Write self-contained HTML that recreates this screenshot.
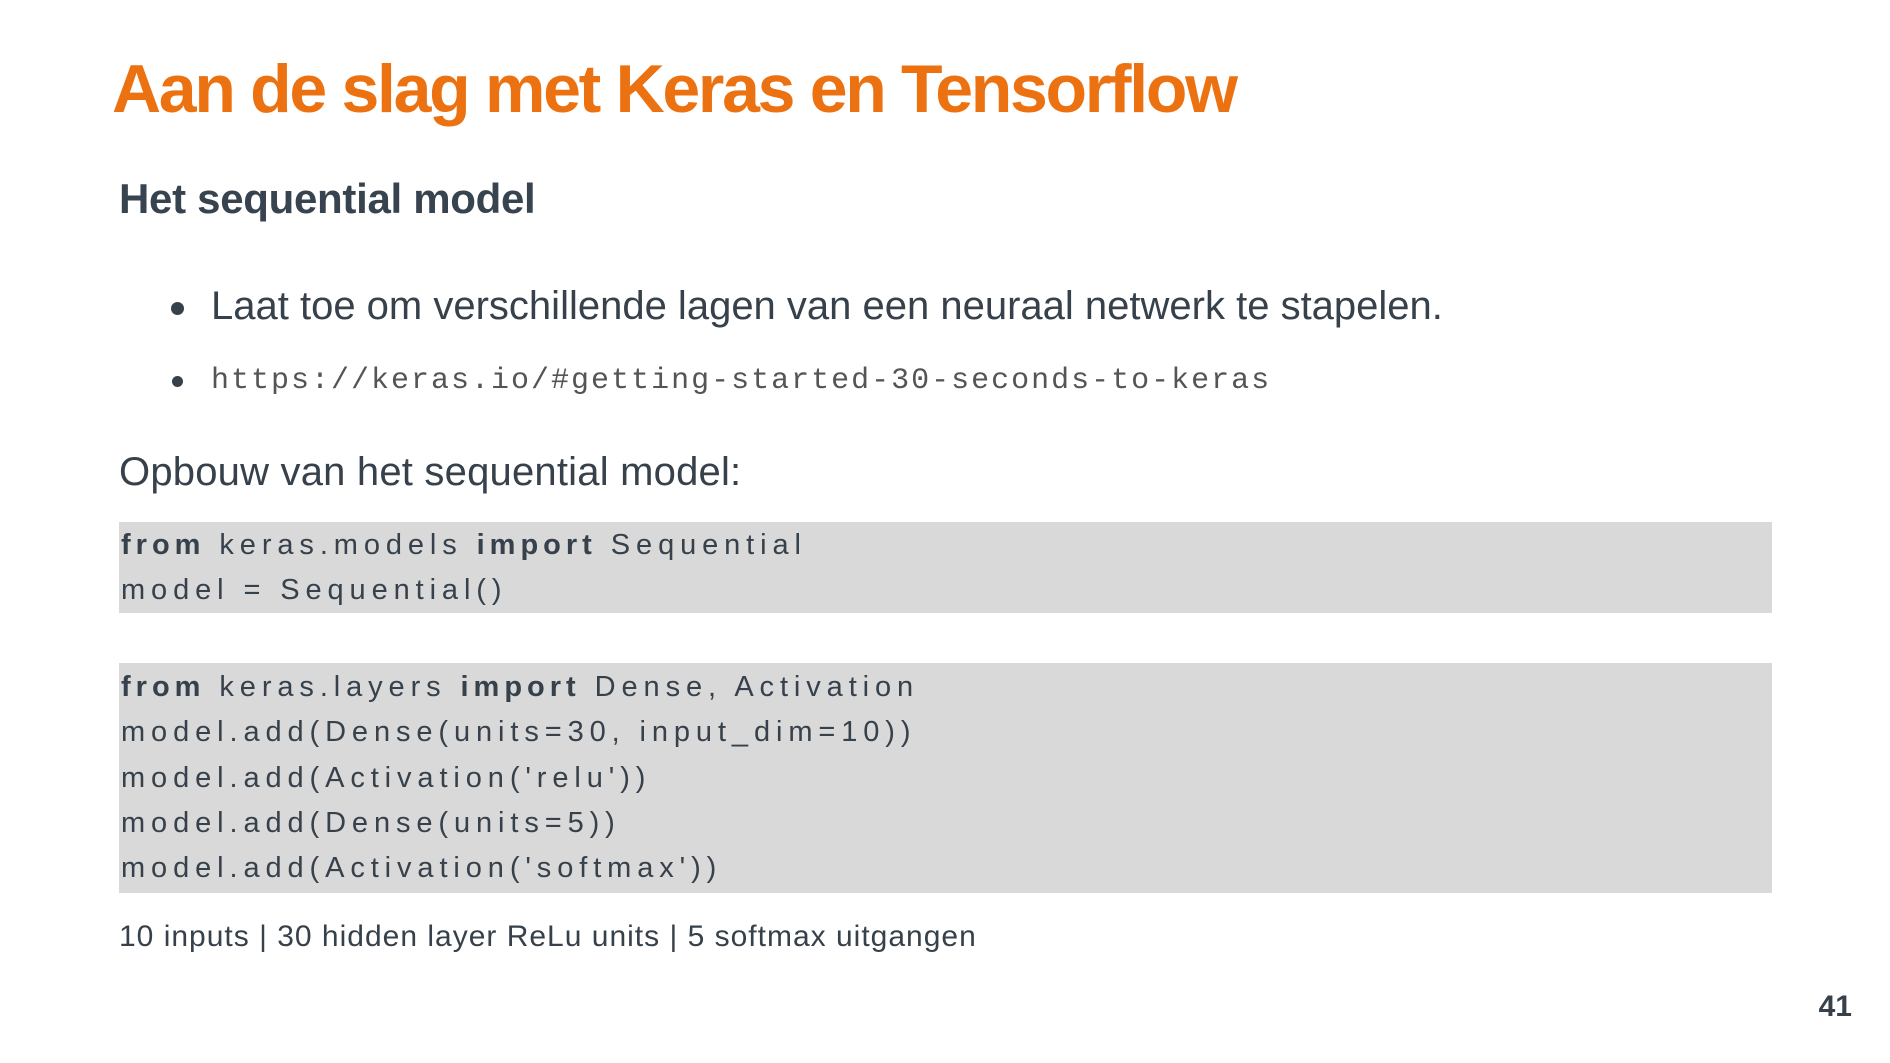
<!DOCTYPE html>
<html><head><meta charset="utf-8"><style>
html,body{margin:0;padding:0;background:#fff;}
body{width:1890px;height:1063px;position:relative;overflow:hidden;font-family:"Liberation Sans",sans-serif;color:#37414b;}
.a{position:absolute;white-space:nowrap;line-height:1;}
.t{left:112px;top:55px;font-size:68px;font-weight:bold;color:#ec7211;letter-spacing:-2.3px;}
.h{left:119px;top:178px;font-size:42px;font-weight:bold;color:#37434f;letter-spacing:-0.3px;}
.b{left:211px;top:286px;font-size:40px;letter-spacing:0px;}
.dot{position:absolute;width:13px;height:13px;border-radius:50%;background:#37414b;}
.m{left:211px;top:366px;font-family:"Liberation Mono",monospace;font-size:30px;color:#555;letter-spacing:2px;}
.o{left:119px;top:452px;font-size:40px;letter-spacing:0.2px;}
.box{position:absolute;left:119px;width:1653px;background:#d9d9d9;}
.c{position:absolute;left:121px;font-size:29px;letter-spacing:5.9px;color:#37414b;white-space:pre;line-height:1;}
.c b{letter-spacing:5px;}
.f{left:119px;top:922px;font-size:30px;letter-spacing:1px;}
.n{right:38px;top:992px;font-size:30px;font-weight:bold;}
</style></head><body>
<div class="a t">Aan de slag met Keras en Tensorflow</div>
<div class="a h">Het sequential model</div>
<div class="dot" style="left:171px;top:302px"></div>
<div class="a b">Laat toe om verschillende lagen van een neuraal netwerk te stapelen.</div>
<div class="dot" style="left:172px;top:376px;width:11px;height:11px"></div>
<div class="a m">https://keras.io/#getting-started-30-seconds-to-keras</div>
<div class="a o">Opbouw van het sequential model:</div>
<div class="box" style="top:522px;height:91px"></div>
<div class="c" style="top:531px"><b>from</b> keras.models <b>import</b> Sequential</div>
<div class="c" style="top:576px">model = Sequential()</div>
<div class="box" style="top:663px;height:230px"></div>
<div class="c" style="top:673px"><b>from</b> keras.layers <b>import</b> Dense, Activation</div>
<div class="c" style="top:718px">model.add(Dense(units=30, input_dim=10))</div>
<div class="c" style="top:764px">model.add(Activation('relu'))</div>
<div class="c" style="top:809px">model.add(Dense(units=5))</div>
<div class="c" style="top:854px">model.add(Activation('softmax'))</div>
<div class="a f">10 inputs | 30 hidden layer ReLu units | 5 softmax uitgangen</div>
<div class="a n">41</div>
</body></html>
